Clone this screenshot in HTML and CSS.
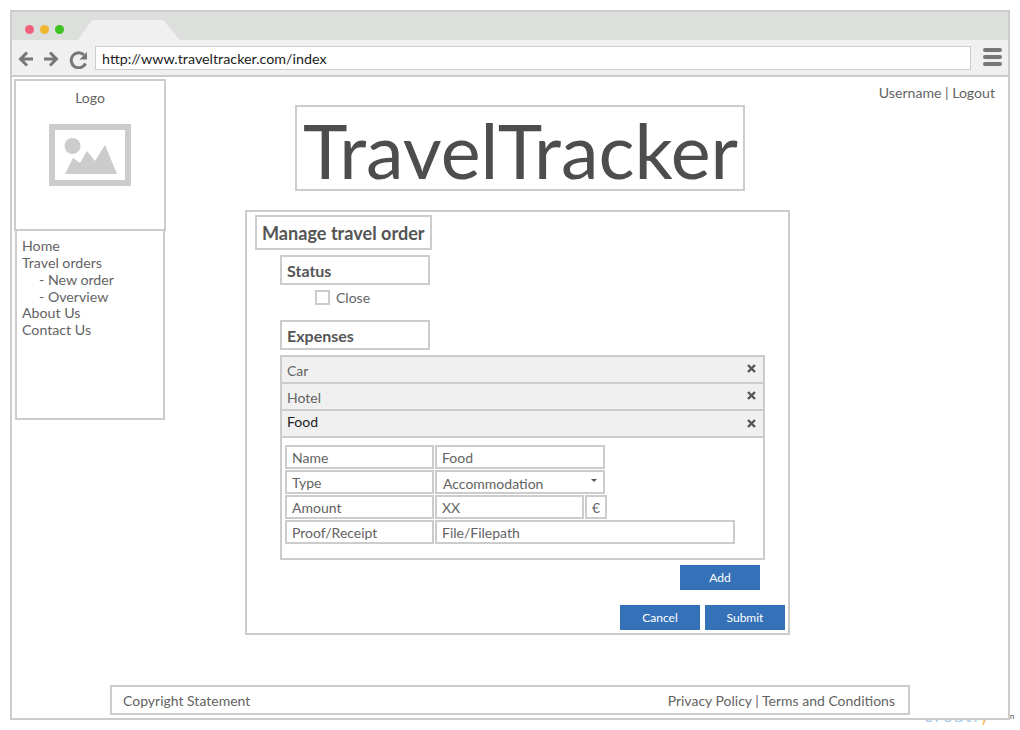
FILE: index.html
```html
<!DOCTYPE html>
<html lang="en">
<head>
    <meta charset="UTF-8">
    <title>TravelTracker</title>
    <link rel="stylesheet" href="styles.css">
</head>
<body>
    <div class="watermark">creatl<span class="watermark-y">y</span></div>
    <div class="watermark-n">n</div>
    <div class="frame">
        <div class="titlebar">
            <div class="dots">
                <span class="dot dot-red"></span>
                <span class="dot dot-yellow"></span>
                <span class="dot dot-green"></span>
            </div>
            <div class="tab"></div>
        </div>
        <div class="toolbar">
            <svg class="nav-icons" width="72" height="20" viewBox="0 0 72 20">
                <path d="M16 10H4M10 3.500L3.500 10L10 16.500" fill="none" stroke="#777" stroke-width="3"/>
                <path d="M27 10H39M33 3.500L39.500 10L33 16.500" fill="none" stroke="#777" stroke-width="3"/>
                <path d="M68.500 14.500A7.500 7.500 0 1 1 67 6" fill="none" stroke="#777" stroke-width="3"/>
                <path d="M70 3V10.500H62.500Z" fill="#777"/>
            </svg>
            <div class="address">http://www.traveltracker.com/index</div>
            <div class="menu-icon"><span></span><span></span><span></span></div>
        </div>
        <div class="page">
            <aside class="sidebar">
                <div class="logo-box">
                    <div class="logo-text">Logo</div>
                    <svg class="logo-img" width="82" height="62" viewBox="0 0 82 62">
                        <rect x="3" y="3" width="76" height="56" fill="none" stroke="#ccc" stroke-width="6"/>
                        <circle cx="23.500" cy="22" r="8" fill="#ccc"/>
                        <path d="M16 50L24 34L31 39L38 27L46 37L56 21L68 50Z" fill="#ccc"/>
                    </svg>
                </div>
                <nav class="side-nav">
                    <div>Home</div>
                    <div>Travel orders</div>
                    <div class="sub">- New order</div>
                    <div class="sub">- Overview</div>
                    <div>About Us</div>
                    <div>Contact Us</div>
                </nav>
            </aside>
            <main class="content">
                <div class="top-row">
                    <h1 class="site-title">TravelTracker</h1>
                    <div class="user-links">Username | Logout</div>
                </div>
                <section class="order-form">
                    <h2 class="form-heading">Manage travel order</h2>
                    <div class="form-body">
                        <h3 class="section-heading">Status</h3>
                        <label class="check-row"><span class="checkbox"></span>Close</label>
                        <h3 class="section-heading expenses-heading">Expenses</h3>
                        <div class="accordion">
                            <div class="acc-row acc-closed">
                                <span>Car</span>
                                <svg class="acc-x" width="9" height="9" viewBox="0 0 9 9"><path d="M1 1L8 8M8 1L1 8" stroke="#555" stroke-width="2.400"/></svg>
                            </div>
                            <div class="acc-row acc-closed">
                                <span>Hotel</span>
                                <svg class="acc-x" width="9" height="9" viewBox="0 0 9 9"><path d="M1 1L8 8M8 1L1 8" stroke="#555" stroke-width="2.400"/></svg>
                            </div>
                            <div class="acc-row acc-open">
                                <span>Food</span>
                                <svg class="acc-x" width="9" height="9" viewBox="0 0 9 9"><path d="M1 1L8 8M8 1L1 8" stroke="#555" stroke-width="2.400"/></svg>
                            </div>
                            <div class="acc-body">
                                <div class="field-row">
                                    <div class="cell label-cell">Name</div>
                                    <div class="cell value-cell">Food</div>
                                </div>
                                <div class="field-row">
                                    <div class="cell label-cell">Type</div>
                                    <div class="cell value-cell select-cell">Accommodation<span class="caret"></span></div>
                                </div>
                                <div class="field-row">
                                    <div class="cell label-cell">Amount</div>
                                    <div class="cell amount-cell">XX</div>
                                    <div class="cell euro-cell">&euro;</div>
                                </div>
                                <div class="field-row">
                                    <div class="cell label-cell">Proof/Receipt</div>
                                    <div class="cell file-cell">File/Filepath</div>
                                </div>
                            </div>
                        </div>
                        <div class="add-row"><button class="btn">Add</button></div>
                    </div>
                    <div class="form-actions">
                        <button class="btn">Cancel</button>
                        <button class="btn">Submit</button>
                    </div>
                </section>
            </main>
        </div>
        <footer class="footer">
            <span>Copyright Statement</span>
            <span>Privacy Policy | Terms and Conditions</span>
        </footer>
    </div>
</body>
</html>
```

FILE: styles.css
```css
* {
    box-sizing: border-box;
}
html, body {
    height: 100%;
}
body {
    margin: 0;
    background: #fff;
    font-family: Lato, Arial, sans-serif;
    font-size: 14px;
    color: #636363;
    overflow: hidden;
}

/* browser frame */
.frame {
    position: relative;
    display: flex;
    flex-direction: column;
    width: 1000px;
    height: 710px;
    margin: 10px;
    border: 2px solid #ccc;
    background: #fff;
}
.watermark {
    position: absolute;
    left: 924px;
    top: 704px;
    font-size: 18px;
    letter-spacing: 2px;
    color: #a9cbe6;
}
.watermark-y {
    color: #f2b96b;
}
.watermark-n {
    position: absolute;
    left: 1010px;
    top: 711px;
    font-size: 8px;
    color: #555;
}
.titlebar {
    display: flex;
    height: 28px;
    background: #dddfdd;
}
.dots {
    display: flex;
    gap: 6px;
    padding: 13px 0 0 13px;
}
.dot {
    width: 9px;
    height: 9px;
    border-radius: 50%;
}
.dot-red { background: #f0607a; }
.dot-yellow { background: #f0b731; }
.dot-green { background: #3cc31f; }
.tab {
    width: 102px;
    height: 20px;
    margin: 8px 0 0 14px;
    background: #f0f0f0;
    clip-path: polygon(0 100%, 14px 0, 85px 0, 100% 100%);
}
.toolbar {
    display: flex;
    align-items: center;
    height: 37px;
    padding: 0 6px 2px 5px;
    background: #f0f0f0;
    border-bottom: 2px solid #ccc;
}
.nav-icons {
    width: 72px;
    margin: 5px 6px 0 0;
}
.address {
    width: 876px;
    height: 24px;
    margin-top: 3px;
    padding-left: 6px;
    background: #fff;
    border: 1px solid #ccc;
    color: #222;
    font-size: 14.300px;
    line-height: 23px;
}
.menu-icon {
    display: flex;
    flex-direction: column;
    gap: 3px;
    width: 19px;
    margin-left: 12px;
}
.menu-icon span {
    height: 4px;
    border-radius: 2px;
    background: #777;
}

/* page */
.page {
    display: flex;
    flex: 1;
}
.sidebar {
    width: 154px;
    padding: 2px 0 0 2px;
}
.logo-box {
    height: 152px;
    border: 2px solid #ccc;
    text-align: center;
}
.logo-text {
    margin-top: 8px;
    line-height: 17px;
}
.logo-img {
    display: block;
    margin: 18px auto 0;
}
.side-nav {
    height: 189px;
    margin: 0 1px;
    padding: 7.300px 5px;
    border: 2px solid #ccc;
    border-top: 0;
    font-size: 14.200px;
    line-height: 16.800px;
}
.sub {
    padding-left: 17px;
}
.content {
    flex: 1;
}
.top-row {
    display: flex;
    justify-content: space-between;
    align-items: flex-start;
    padding: 28px 13px 0 129px;
}
.site-title {
    width: 450px;
    height: 86px;
    margin: 0;
    padding-left: 1px;
    border: 2px solid #ccc;
    font-size: 75.500px;
    font-weight: 400;
    line-height: 86px;
    color: #4d4d4d;
    text-align: center;
    white-space: nowrap;
}
.user-links {
    margin-top: -21px;
    line-height: 17px;
    font-size: 14.100px;
}

/* form */
.order-form {
    width: 545px;
    height: 425px;
    margin: 19px 0 0 79px;
    padding: 3px 0 0 8px;
    border: 2px solid #ccc;
}
.form-heading {
    width: 177px;
    height: 35px;
    margin: 0;
    padding-left: 5px;
    border: 2px solid #ccc;
    font-size: 18.100px;
    font-weight: 700;
    line-height: 33px;
    color: #555;
    white-space: nowrap;
}
.form-body {
    padding: 5px 0 0 25px;
}
.section-heading {
    width: 150px;
    height: 30px;
    margin: 0;
    padding-left: 5px;
    border: 2px solid #ccc;
    font-size: 16px;
    font-weight: 700;
    line-height: 28px;
    color: #555;
}
.check-row {
    display: flex;
    align-items: center;
    height: 15px;
    margin: 5px 0 15px 35px;
}
.checkbox {
    width: 15px;
    height: 15px;
    margin-right: 6px;
    border: 2px solid #ccc;
}
.accordion {
    width: 485px;
    height: 205px;
    margin-top: 5px;
    border: 2px solid #ccc;
}
.acc-row {
    display: flex;
    justify-content: space-between;
    align-items: center;
    height: 27px;
    padding: 0 7px 0 5px;
    background: #f0f0f0;
    border-bottom: 2px solid #ccc;
}
.acc-closed span {
    padding-top: 1px;
}
.acc-open {
    color: #222;
}
.acc-open span {
    padding-bottom: 5px;
}
.acc-x {
    margin-bottom: 3px;
}
.acc-open .acc-x {
    margin-bottom: 0;
}
.acc-body {
    display: flex;
    flex-direction: column;
    gap: 1px;
    padding: 7px 3px 0;
}
.field-row {
    display: flex;
    gap: 1px;
}
.cell {
    height: 24px;
    padding-left: 5px;
    border: 2px solid #ccc;
    line-height: 22px;
}
.label-cell { width: 149px; }
.value-cell { width: 170px; }
.amount-cell { width: 149px; }
.euro-cell { width: 22px; padding-left: 5px; }
.file-cell { width: 300px; }
.select-cell {
    position: relative;
    padding-left: 6px;
    line-height: 24px;
}
.caret {
    position: absolute;
    right: 6px;
    top: 7px;
    border-left: 3px solid transparent;
    border-right: 3px solid transparent;
    border-top: 3px solid #555;
}
.add-row {
    display: flex;
    justify-content: flex-end;
    width: 480px;
    margin-top: 5px;
}
.btn {
    width: 80px;
    height: 25px;
    padding: 0;
    background: #3571b8;
    color: #fff;
    border: none;
    font-family: Lato, Arial, sans-serif;
    font-size: 12px;
}
.form-actions {
    display: flex;
    justify-content: flex-end;
    gap: 5px;
    width: 530px;
    margin-top: 15px;
}

/* footer */
.footer {
    display: flex;
    justify-content: space-between;
    align-items: center;
    width: 800px;
    height: 30px;
    margin: 0 0 3px 98px;
    padding: 0 13px 0 11px;
    border: 2px solid #ccc;
}
```
